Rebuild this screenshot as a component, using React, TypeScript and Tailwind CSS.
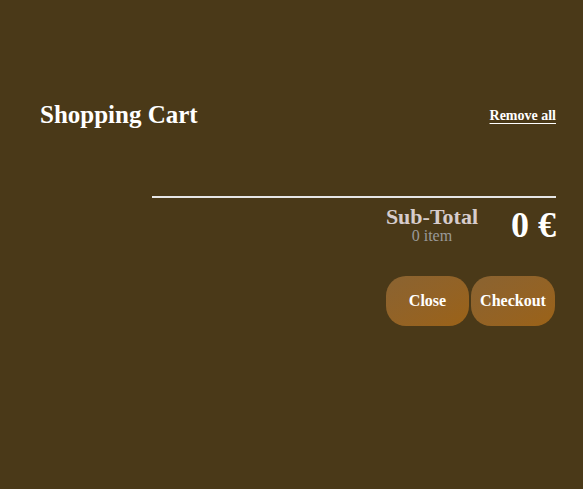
export default function App() {
  return (
    <div className="min-h-[489px] w-full bg-[#4a3918] pl-[40px] pr-[27px] pt-[100px] font-['Liberation_Serif',serif] text-white">
      <div className="flex items-center justify-between">
        <h1 className="text-[25px] font-bold leading-[30px]">Shopping Cart</h1>
        <button className="text-[14px] font-bold underline underline-offset-[3px]">Remove all</button>
      </div>

      <div className="ml-auto mt-[66px] h-[2px] w-[404px] bg-[#e6e6e6]" />

      <div className="mt-[7px] flex items-center justify-end gap-[33px]">
        <div className="flex flex-col items-center">
          <span className="text-[22px] font-bold leading-[22px] text-[#d6cccc]">Sub-Total</span>
          <span className="text-[16px] leading-[16px] text-[#9a9a9a]">0 item</span>
        </div>
        <span className="text-[36px] font-bold leading-[40px]">0 €</span>
      </div>

      <div className="mt-[31px] mr-[1px] flex justify-end gap-[2px]">
        <button className="h-[50px] w-[83px] rounded-[20px] bg-gradient-to-br from-[#8a6331] to-[#9b6216] text-[16px] font-bold">
          Close
        </button>
        <button className="h-[50px] w-[84px] rounded-[20px] bg-gradient-to-br from-[#8a6331] to-[#9b6216] text-[16px] font-bold">
          Checkout
        </button>
      </div>
    </div>
  );
}
